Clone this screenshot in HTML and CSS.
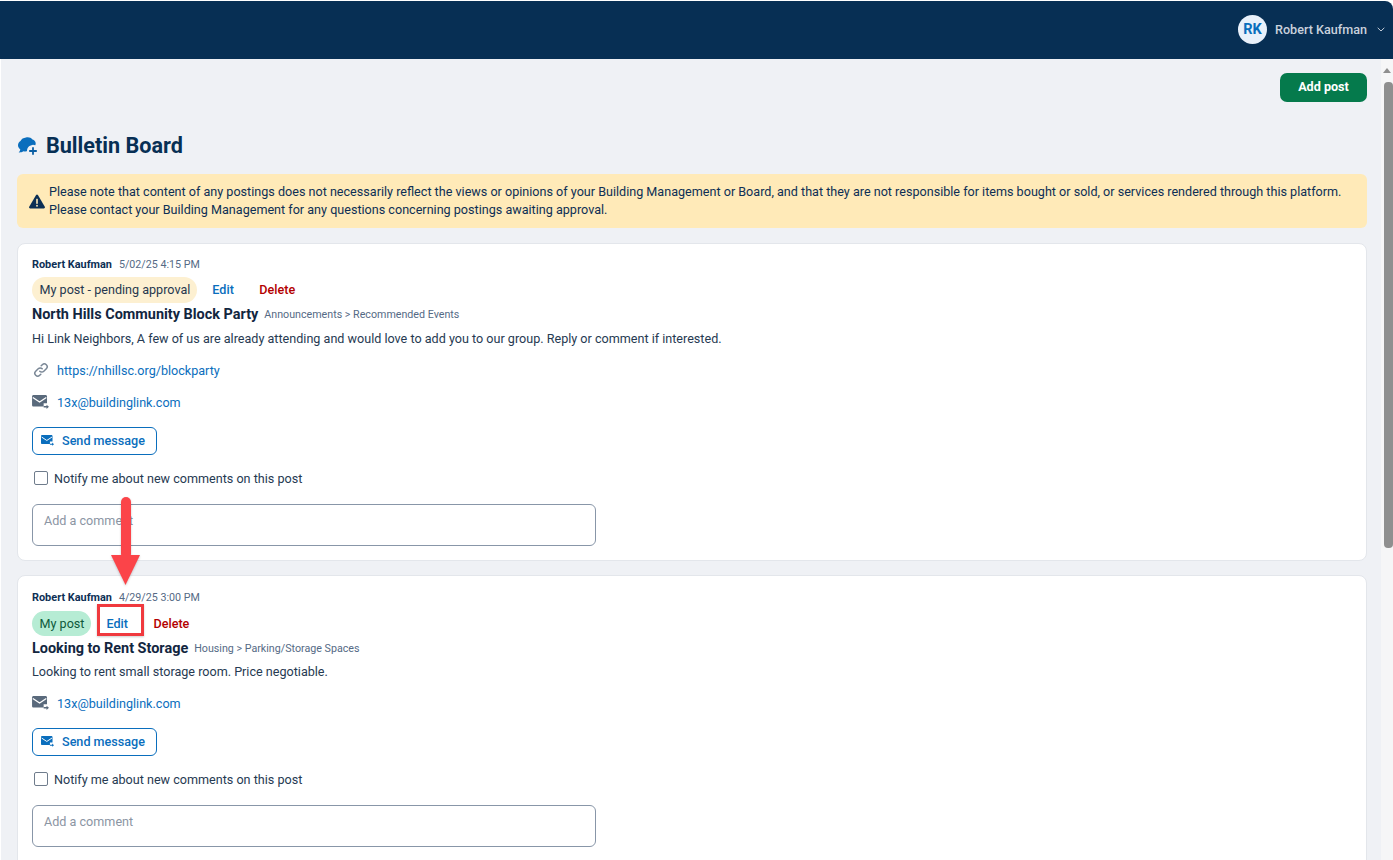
FILE: index.html
```html
<!DOCTYPE html>
<html lang="en">
<head>
<meta charset="utf-8">
<title>Bulletin Board</title>
<link rel="stylesheet" href="styles.css">
</head>
<body>
<svg class="defs" width="0" height="0" aria-hidden="true">
  <symbol id="mail" viewBox="0 0 17.500 14.500">
    <path fill="currentColor" d="M1.500 0h12.500c.8 0 1.500.7 1.500 1.500V8.500h-3.500v3.500H1.500C.7 12 0 11.300 0 10.500v-9C0 .7.700 0 1.500 0z"/>
    <path fill="none" stroke="#fff" stroke-width="1.300" d="M.8 2.600 7.800 7.200 14.800 2.600"/>
    <path fill="currentColor" d="M12 11.500h3V10l2.500 2.200-2.500 2.200V13h-3z"/>
  </symbol>
</svg>
<header class="topbar">
  <div class="avatar">RK</div>
  <span class="username">Robert Kaufman</span>
  <svg class="chev" viewBox="0 0 8 5" width="8" height="5"><path d="M.7.8 4 4 7.300.8" fill="none" stroke="#c3ccd8" stroke-width="1"/></svg>
</header>
<div class="viewport">
  <main class="content">
    <div class="actions"><button class="add">Add post</button></div>
    <h1 class="title">
      <svg class="title-icon" viewBox="0 0 20 19" width="20" height="19">
        <path fill="#0a6ebd" d="M8 .5C11 0 13 .8 14.500 2.400c1.800.6 3.200 2 3.200 4 0 .8-.2 1.300-.5 1.900a6 6 0 0 0-8.200 6c-.5.100-1 .1-1.500.100-.7 0-1.300-.1-2-.2C4.200 15 2.500 15.500.7 15.400c.9-.9 1.500-1.900 1.600-3C.9 11.400 0 9.900 0 8.200 0 6.400 1 5 2.500 4 3.300 2 5.500.8 8 .5z"/>
        <path fill="none" stroke="#0a5ea3" stroke-width="1.800" d="M15 10.200v7.600M11.200 14h7.600"/>
      </svg>
      Bulletin Board
    </h1>
    <div class="notice">
      <svg class="warn" viewBox="0 0 16 14" width="16" height="15">
        <path fill="#0b2f55" d="M8 0c.4 0 .7.2.9.5l6.900 11.800c.4.700-.1 1.700-.9 1.700H1.100c-.8 0-1.300-1-.9-1.700L7.100.5C7.300.2 7.600 0 8 0z"/>
        <rect x="7.200" y="4.300" width="1.600" height="5" fill="#ffeab8"/>
        <rect x="7.200" y="10.400" width="1.600" height="1.700" fill="#ffeab8"/>
      </svg>
      <p>Please note that content of any postings does not necessarily reflect the views or opinions of your Building Management or Board, and that they are not responsible for items bought or sold, or services rendered through this platform. Please contact your Building Management for any questions concerning postings awaiting approval.</p>
    </div>

    <article class="card">
      <div class="meta"><strong>Robert Kaufman</strong><span>5/02/25 4:15 PM</span></div>
      <div class="status">
        <span class="pill pending">My post - pending approval</span>
        <a class="edit">Edit</a>
        <a class="delete">Delete</a>
      </div>
      <div class="heading"><h2>North Hills Community Block Party</h2><span>Announcements &gt; Recommended Events</span></div>
      <p class="body">Hi Link Neighbors, A few of us are already attending and would love to add you to our group. Reply or comment if interested.</p>
      <div class="contact">
        <svg class="link-icon" viewBox="0 0 16 16" width="16" height="16"><path fill="none" stroke="#7a8796" stroke-width="1.500" stroke-linecap="round" d="M6.800 9.200a2.800 2.800 0 0 0 4 0l2.500-2.500a2.800 2.800 0 0 0-4-4L8.200 3.800M9.200 6.800a2.800 2.800 0 0 0-4 0L2.700 9.300a2.800 2.800 0 0 0 4 4l1.100-1.100"/></svg>
        <a>https://nhillsc.org/blockparty</a>
      </div>
      <div class="contact">
        <svg class="mail-icon" width="17" height="14"><use href="#mail"/></svg>
        <a>13x@buildinglink.com</a>
      </div>
      <button class="send"><svg width="13" height="11"><use href="#mail"/></svg>Send message</button>
      <label class="notify"><span class="box"></span>Notify me about new comments on this post</label>
      <div class="comment">Add a comment</div>
    </article>

    <article class="card second">
      <div class="meta"><strong>Robert Kaufman</strong><span>4/29/25 3:00 PM</span></div>
      <div class="status">
        <span class="pill mine">My post</span>
        <a class="edit">Edit</a>
        <a class="delete">Delete</a>
      </div>
      <div class="heading"><h2>Looking to Rent Storage</h2><span>Housing &gt; Parking/Storage Spaces</span></div>
      <p class="body">Looking to rent small storage room. Price negotiable.</p>
      <div class="contact">
        <svg class="mail-icon" width="17" height="14"><use href="#mail"/></svg>
        <a>13x@buildinglink.com</a>
      </div>
      <button class="send"><svg width="13" height="11"><use href="#mail"/></svg>Send message</button>
      <label class="notify"><span class="box"></span>Notify me about new comments on this post</label>
      <div class="comment">Add a comment</div>
    </article>

    <div class="highlight"></div>
    <svg class="arrow" viewBox="0 0 29 88" width="29" height="88">
      <rect x="10" y="0" width="10" height="62" rx="5" fill="#fb4449"/>
      <path d="M0 58h29L14.500 88z" fill="#fb4449"/>
    </svg>
  </main>
  <aside class="scrollbar">
    <span class="up"></span>
    <span class="thumb"></span>
  </aside>
</div>
</body>
</html>
```
FILE: styles.css
```css
* { box-sizing: border-box; }
html, body { height: 100%; }
body {
  margin: 0;
  overflow: hidden;
  display: flex;
  flex-direction: column;
  font-family: Roboto, "Liberation Sans", sans-serif;
  font-size: 12.6px;
  color: #12263f;
  background: #fff;
}
.defs { position: absolute; }
.topbar {
  margin-top: 1px;
  height: 58px;
  flex: none;
  background: #072f54;
  border-top-right-radius: 8px;
  display: flex;
  align-items: center;
  justify-content: flex-end;
  padding: 0 8px 1px 0;
}
.avatar {
  width: 29px;
  height: 29px;
  border-radius: 50%;
  background: #e9f1fb;
  color: #0a6ebd;
  font-weight: 700;
  font-size: 14.500px;
  display: flex;
  align-items: center;
  justify-content: center;
}
.username {
  margin-left: 8px;
  color: #c9d1dc;
  font-weight: 500;
  font-size: 12.6px;
}
.chev { margin-left: 10px; }
.viewport {
  flex: 1;
  min-height: 0;
  display: flex;
}
.content {
  position: relative;
  flex: 1;
  min-width: 0;
  overflow: hidden;
  margin-left: 1px;
  background: #eff1f5;
  padding: 14px 14px 0 16px;
}
.actions { display: flex; justify-content: flex-end; }
.add {
  width: 87px;
  height: 29px;
  border: 0;
  border-radius: 7px;
  background: #057a4c;
  color: #fff;
  padding: 0 0 2px;
  font: 700 12.6px Roboto, sans-serif;
}
.title {
  margin: 29px 0 0;
  height: 30px;
  display: flex;
  align-items: center;
  gap: 8px;
  font-size: 21.6px;
  font-weight: 700;
  color: #072f54;
  line-height: 30px;
}
.title-icon { flex: none; margin: 0 0 0 1px; }
.notice {
  margin-top: 13px;
  height: 54px;
  display: flex;
  align-items: center;
  gap: 4px;
  padding: 0 16px 0 12px;
  border-radius: 6px;
  background: #ffeab8;
  color: #0d2f55;
}
.warn { flex: none; }
.notice p { margin: 0; line-height: 18px; }
.card {
  margin-top: 14px;
  height: 318px;
  padding: 12px 14px 0;
  background: #fff;
  border: 1px solid #e3e6eb;
  border-radius: 8px;
}
.card:first-of-type { margin-top: 15px; }
.card.second { height: 330px; padding-top: 13px; }
.meta {
  height: 16px;
  display: flex;
  align-items: center;
  gap: 7px;
  font-size: 10.7px;
  color: #556a85;
}
.meta strong { font-weight: 700; color: #0d2f55; font-size: 10.9px; }
.status {
  margin-top: 5px;
  height: 26px;
  display: flex;
  align-items: center;
}
.second .status { margin-top: 6px; height: 25px; }
.pill {
  height: 100%;
  padding: 0 7px 1px 7.500px;
  border-radius: 13px;
  display: flex;
  align-items: center;
  color: #26384f;
}
.pending { background: #fdf0d1; }
.mine { background: #b6ecd4; color: #0e5a3c; }
.edit, .delete { padding-bottom: 1px; font-weight: 500; }
.edit { margin-left: 15px; color: #0a6ebd; }
.delete { margin-left: 25.500px; color: #b30000; }
.heading {
  margin-top: 1px;
  height: 20px;
  display: flex;
  align-items: center;
  gap: 6px;
}
.second .heading { margin-top: 2px; }
.heading h2 { margin: 0; font-size: 14.45px; font-weight: 700; color: #12263f; }
.heading span { font-size: 10.7px; color: #556a85; }
.body { margin: 6px 0 0; line-height: 18px; color: #263a52; }
.second .body { margin-top: 5px; }
.contact {
  margin-top: 14px;
  height: 18px;
  display: flex;
  align-items: center;
  gap: 8px;
}
.body + .contact { margin-top: 13px; }
.contact a { color: #0a6ebd; }
.link-icon { margin-left: 1px; flex: none; }
.mail-icon { flex: none; color: #5a6a7c; }
.send {
  margin-top: 16px;
  width: 125px;
  height: 28px;
  display: flex;
  align-items: center;
  gap: 8px;
  padding: 0 0 1px 8px;
  border: 1px solid #0a6ebd;
  border-radius: 6px;
  background: #fff;
  color: #0a6ebd;
  font: 500 12.6px Roboto, sans-serif;
}
.send svg { flex: none; }
.notify {
  margin-top: 14px;
  height: 18px;
  display: flex;
  align-items: center;
  gap: 6px;
  color: #263a52;
}
.box {
  width: 14px;
  height: 14px;
  margin-left: 2px;
  border: 1.500px solid #6f7c8c;
  border-radius: 2px;
  background: #fff;
}
.comment {
  margin-top: 17px;
  width: 564px;
  height: 42px;
  padding: 8px 11px;
  border: 1px solid #8896a8;
  border-radius: 6px;
  color: #8b95a3;
  line-height: 15px;
}
.highlight {
  position: absolute;
  left: 96px;
  top: 545px;
  width: 47px;
  height: 32px;
  border: 3px solid #f0393e;
  box-shadow: 0 1px 2px rgba(0, 0, 0, .2);
}
.arrow {
  position: absolute;
  left: 110px;
  top: 438px;
  filter: drop-shadow(0 1px 1px rgba(0, 0, 0, .2));
}
.scrollbar {
  position: relative;
  flex: none;
  width: 12px;
  background: #f6f6f7;
}
.up {
  position: absolute;
  left: 2px;
  top: 9px;
  width: 0;
  height: 0;
  border: 4px solid transparent;
  border-top: 0;
  border-bottom: 5px solid #8f8f8f;
}
.thumb {
  position: absolute;
  left: 3px;
  top: 23px;
  width: 9px;
  height: 466px;
  border-radius: 4px;
  background: #8f8f8f;
}
```
